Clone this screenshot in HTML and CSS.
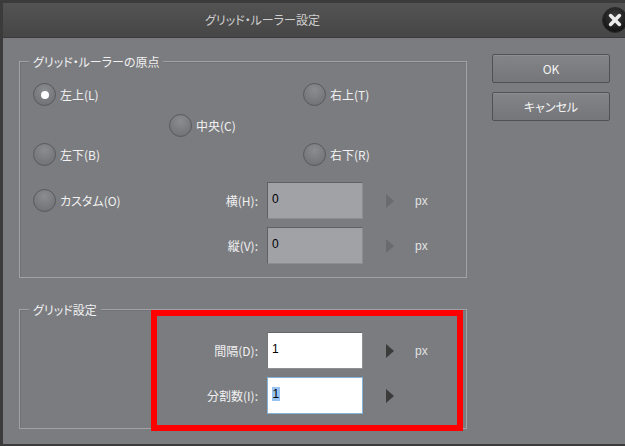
FILE: index.html
```html
<!DOCTYPE html>
<html lang="ja">
<head>
<meta charset="utf-8">
<title>グリッド・ルーラー設定</title>
<link rel="stylesheet" href="styles.css">
</head>
<body>
<div class="window">
  <div class="titlebar">
    <div class="title">グリッド・ルーラー設定</div>
    <div class="close">
      <svg width="26" height="26" viewBox="0 0 26 26">
        <defs>
          <radialGradient id="cg" cx="50%" cy="35%" r="65%">
            <stop offset="0" stop-color="#3c3c3c"/>
            <stop offset="1" stop-color="#121212"/>
          </radialGradient>
        </defs>
        <circle cx="13" cy="13" r="12.5" fill="url(#cg)" stroke="#2b2b2b"/>
        <path d="M8.6 8.6 L17.4 17.4 M17.4 8.6 L8.6 17.4" stroke="#ececec" stroke-width="3.6" stroke-linecap="round"/>
      </svg>
    </div>
  </div>
  <div class="body">
    <div class="main">
      <section class="group g1">
        <span class="legend">グリッド・ルーラーの原点</span>
        <div class="radios">
          <div class="radio r-tl"><span class="circ checked"></span><span>左上(L)</span></div>
          <div class="radio r-tr"><span class="circ"></span><span>右上(T)</span></div>
          <div class="radio r-c"><span class="circ"></span><span>中央(C)</span></div>
          <div class="radio r-bl"><span class="circ"></span><span>左下(B)</span></div>
          <div class="radio r-br"><span class="circ"></span><span>右下(R)</span></div>
        </div>
        <div class="field first">
          <div class="lead">
            <div class="radio"><span class="circ"></span><span>カスタム(O)</span></div>
            <span class="flabel">横(H):</span>
          </div>
          <div class="input disabled">0</div>
          <span class="arrow dim"></span>
          <span class="unit">px</span>
        </div>
        <div class="field">
          <div class="lead"><span class="flabel">縦(V):</span></div>
          <div class="input disabled">0</div>
          <span class="arrow dim"></span>
          <span class="unit">px</span>
        </div>
      </section>
      <section class="group g2">
        <span class="legend">グリッド設定</span>
        <div class="field">
          <div class="lead"><span class="flabel">間隔(D):</span></div>
          <div class="input">1</div>
          <span class="arrow"></span>
          <span class="unit">px</span>
        </div>
        <div class="field">
          <div class="lead"><span class="flabel">分割数(I):</span></div>
          <div class="input focus"><span class="sel">1</span></div>
          <span class="arrow"></span>
        </div>
        <div class="annot"></div>
      </section>
    </div>
    <div class="buttons">
      <div class="btn">OK</div>
      <div class="btn">キャンセル</div>
    </div>
  </div>
</div>
</body>
</html>
```
FILE: styles.css
```css
* { box-sizing: border-box; }
html, body { margin: 0; padding: 0; }
body {
  width: 625px;
  height: 446px;
  overflow: hidden;
  background: #3b3b3c;
  font-family: "Noto Sans CJK JP", "Noto Sans", sans-serif;
  font-size: 12px;
  font-feature-settings: "palt";
  color: #f2f2f2;
}
.window {
  margin: 3px 0 0 3px;
  height: 441px;
  display: flex;
  flex-direction: column;
}
.titlebar {
  height: 35px;
  flex: none;
  display: flex;
  align-items: center;
  background: linear-gradient(#535353, #464646);
  border-bottom: 1px solid #3a3a3a;
}
.title {
  flex: 1;
  text-align: center;
  color: #cfcfcf;
  line-height: 14px;
}
.close {
  flex: none;
  width: 26px;
  height: 26px;
  margin-left: 80px;
  margin-right: -3px;
  display: flex;
}
.body {
  flex: 1;
  display: grid;
  grid-template-columns: 448px 118px;
  column-gap: 25px;
  align-items: start;
  padding: 16px 15px 15px 16px;
  background: #7b7c80;
}
.main {
  padding-top: 7px;
  display: flex;
  flex-direction: column;
  gap: 31px;
}
.group {
  position: relative;
  border: 1px solid #a1a2a6;
  box-shadow: inset 1px 1px 0 #707175;
}
.g1 { padding: 21px 0 13px 13px; }
.g2 { padding: 22px 0 14px 13px; }
.legend {
  position: absolute;
  top: -8px;
  left: 9px;
  padding: 0 4px;
  line-height: 15px;
  background: #7b7c80;
  color: #f0f0f0;
}
.radios {
  display: grid;
  grid-template-columns: 136px 134px auto;
  grid-template-rows: 31px 29px 23px;
  align-items: start;
}
.r-tl { grid-column: 1; grid-row: 1; }
.r-tr { grid-column: 3; grid-row: 1; }
.r-c  { grid-column: 2; grid-row: 2; }
.r-bl { grid-column: 1; grid-row: 3; }
.r-br { grid-column: 3; grid-row: 3; }
.radio {
  display: flex;
  align-items: center;
  gap: 4px;
  height: 23px;
  line-height: 14px;
}
.circ {
  flex: none;
  width: 23px;
  height: 23px;
  border-radius: 50%;
  border: 1px solid #58595c;
  background: radial-gradient(circle at 50% 30%, #8b8c90 0%, #7a7b7f 55%, #6d6e72 100%);
  display: flex;
  align-items: center;
  justify-content: center;
}
.circ.checked::after {
  content: "";
  width: 8px;
  height: 8px;
  border-radius: 50%;
  background: #ffffff;
}
.field {
  display: flex;
  align-items: center;
  height: 37px;
  margin-top: 8px;
}
.field.first { margin-top: 16px; }
.g2 .field:first-of-type { margin-top: 0; }
.lead {
  flex: none;
  width: 225px;
  display: flex;
  align-items: center;
  justify-content: space-between;
}
.lead .flabel { margin-left: auto; }
.flabel {
  line-height: 14px;
  color: #f0f0f0;
}
.input {
  flex: none;
  width: 96px;
  height: 37px;
  margin-left: 9px;
  padding: 9px 4px 0;
  line-height: 14px;
  color: #000;
  font-family: "Liberation Sans", sans-serif;
  background: #ffffff;
  border: 1px solid #8e8f93;
  border-top-color: #66676a;
  border-left-color: #76777a;
}
.input.disabled {
  background: #a0a2a6;
  border-color: #5f6063 #8c8d91 #8c8d91 #5f6063;
}
.input.focus {
  border-color: #84b2d8;
}
.sel {
  display: inline-block;
  background: #99c4f2;
  line-height: 14px;
  padding: 0 0.5px;
}
.arrow {
  flex: none;
  width: 0;
  height: 0;
  margin-left: 23px;
  border-left: 8px solid #3b3b3c;
  border-top: 7.5px solid transparent;
  border-bottom: 7.5px solid transparent;
}
.arrow.dim { border-left-color: #6a6b6e; }
.unit {
  margin-left: 21px;
  color: #e2e2e2;
  font-family: "Liberation Sans", sans-serif;
  line-height: 14px;
}
.annot {
  position: absolute;
  left: 131px;
  top: 0;
  width: 312px;
  height: 121px;
  border: 6px solid #ff0000;
  pointer-events: none;
}
.buttons {
  display: flex;
  flex-direction: column;
  gap: 9px;
}
.btn {
  height: 29px;
  border: 1px solid #505154;
  border-radius: 2px;
  background: linear-gradient(#838488, #75767a);
  box-shadow: inset 0 1px 0 #8e8f93;
  display: flex;
  align-items: center;
  justify-content: center;
  color: #f4f4f4;
  line-height: 14px;
}
```
